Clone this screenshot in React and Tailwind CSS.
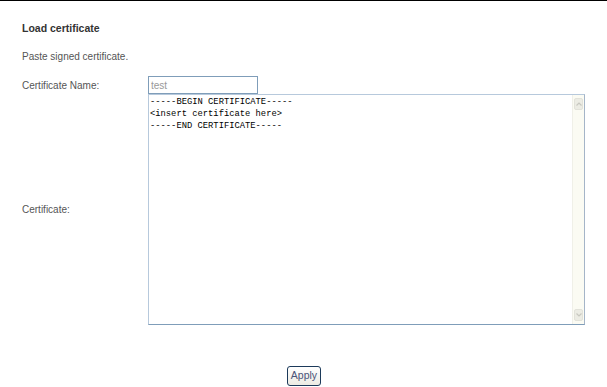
import React, { useState } from 'react';

const App = () => {
    const [name, setName] = useState('test');
    const [cert, setCert] = useState('-----BEGIN CERTIFICATE-----\n<insert certificate here>\n-----END CERTIFICATE-----');

    return (
        <div className="w-[607px] h-[387px] bg-white overflow-hidden text-[10px] text-[#555] font-['Liberation_Sans',Arial,sans-serif]">
            {/* TOP RULE */}
            <div className="h-px bg-black"></div>

            <div className="pl-[22px] pt-[21px]">
                {/* HEADING */}
                <div className="font-bold text-[10.5px] text-[#333] leading-[13px]">Load certificate</div>
                <div className="mt-[15px] leading-[13px]">Paste signed certificate.</div>

                {/* FORM */}
                <div className="mt-[13px] flex">
                    <div className="w-[126px] flex items-center h-[18px]">Certificate Name:</div>
                    <input
                        type="text"
                        value={name}
                        onChange={(e) => setName(e.target.value)}
                        className="w-[110px] h-[18px] px-[2px] border border-[#7f9db9] text-[10px] text-[#999] font-['Liberation_Sans',Arial,sans-serif] outline-none"
                    />
                </div>

                <div className="flex">
                    <div className="w-[126px] flex items-center">Certificate:</div>
                    <div className="w-[437px] h-[231px] flex border border-t-[#b7c9dc] border-l-[#b7c9dc] border-r-[#a5b5c8] border-b-[#7f9db9]">
                        <textarea
                            value={cert}
                            onChange={(e) => setCert(e.target.value)}
                            spellCheck={false}
                            className="flex-1 resize-none outline-none overflow-hidden px-[1px] pt-[1px] text-[8.8px] leading-[12px] text-black font-['Liberation_Mono','Courier_New',monospace]"
                        />
                        {/* SCROLLBAR */}
                        <div className="w-[12px] flex flex-col justify-between bg-[#fbfbf3] border-l border-[#f0f0e8] py-[3px]">
                            <div className="h-[12px] mx-px rounded-[2px] bg-[#ecece4] border border-[#e2e2da] flex items-center justify-center">
                                <svg width="6" height="4" viewBox="0 0 6 4"><path d="M0.5 3.5 L3 1 L5.5 3.5" fill="none" stroke="#c8c8c0" strokeWidth="1.2" /></svg>
                            </div>
                            <div className="h-[12px] mx-px rounded-[2px] bg-[#ecece4] border border-[#e2e2da] flex items-center justify-center">
                                <svg width="6" height="4" viewBox="0 0 6 4"><path d="M0.5 0.5 L3 3 L5.5 0.5" fill="none" stroke="#c8c8c0" strokeWidth="1.2" /></svg>
                            </div>
                        </div>
                    </div>
                </div>

                {/* APPLY BUTTON */}
                <div className="flex pl-[265px] mt-[41px]">
                    <button className="w-[34px] h-[20px] rounded-[3px] border border-[#1c3a5a] bg-gradient-to-b from-white to-[#ecebe3] text-[10.5px] text-[#4a5478] font-['Liberation_Sans',Arial,sans-serif]">
                        Apply
                    </button>
                </div>
            </div>
        </div>
    );
};

export default App;
